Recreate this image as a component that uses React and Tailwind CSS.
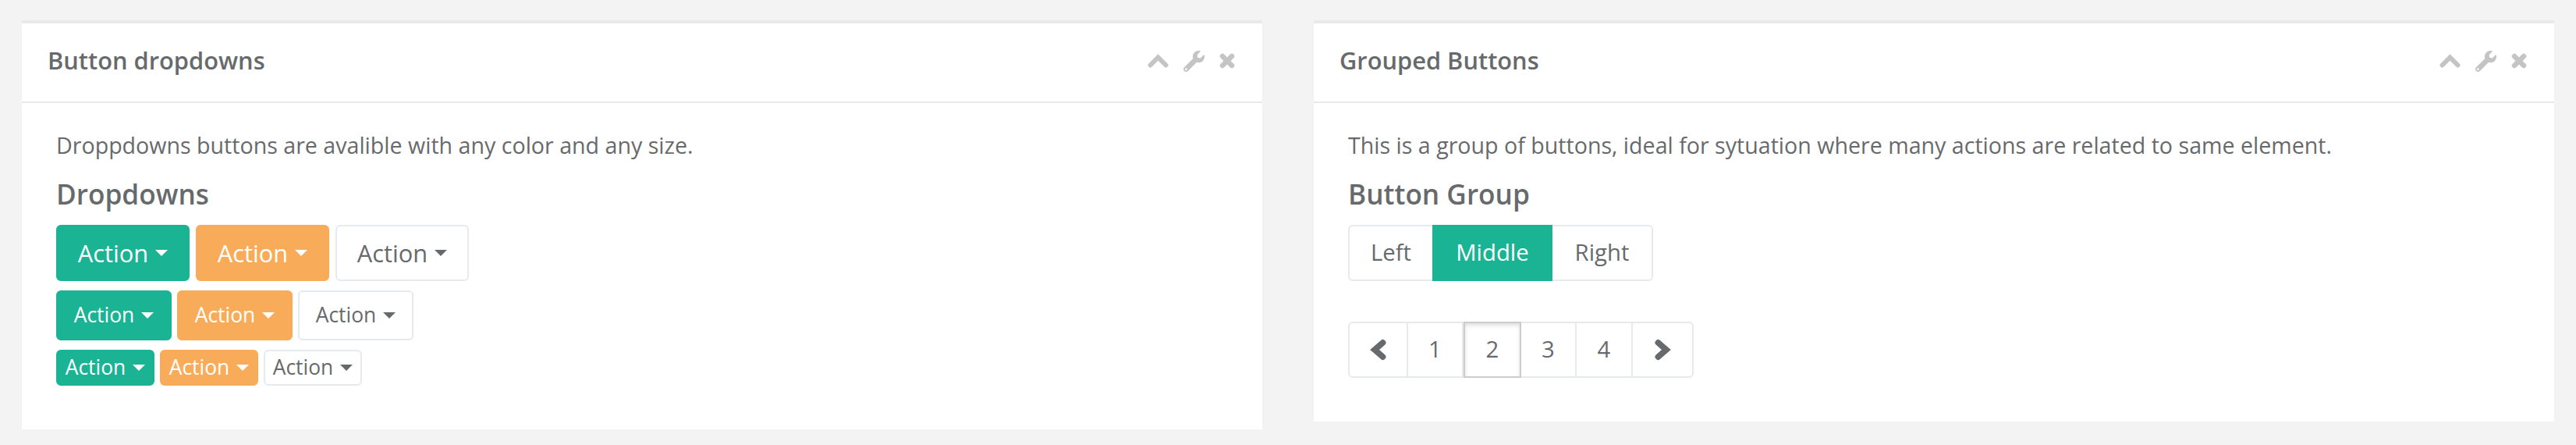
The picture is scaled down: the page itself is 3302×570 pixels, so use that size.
import React from "react";
import { FaWrench } from "react-icons/fa";

function Chevron({ d, className }) {
  return (
    <svg viewBox="0 0 20 20" className={className} fill="none" stroke="currentColor" strokeWidth="5.5" strokeLinecap="round" strokeLinejoin="miter">
      <polyline points={d} />
    </svg>
  );
}

function Panel({ title, className, children }) {
  return (
    <section className={"w-[1590px] bg-white border-t-4 border-[#e7eaec] " + className}>
      <header className="h-[102px] border-b-2 border-[#e7eaec] flex items-center justify-between pl-[33px] pr-[35px]">
        <h5 className="text-[30.8px] font-semibold leading-none text-[#676a6c] -mt-[6px]">{title}</h5>
        <div className="flex items-center gap-[19px] text-[#c4c4c4] -mt-[4px]">
          <svg viewBox="0 0 27 18" className="w-[27px] h-[18px]" fill="none" stroke="currentColor" strokeWidth="6" strokeLinecap="round" strokeLinejoin="miter"><polyline points="3.5,14.5 13.5,4.5 23.5,14.5" /></svg>
          <FaWrench className="w-[27px] h-[27px]" />
          <svg viewBox="0 0 20 20" className="w-[20px] h-[20px]" fill="none" stroke="currentColor" strokeWidth="6.5" strokeLinecap="round"><path d="M4 4 16 16M16 4 4 16" /></svg>
        </div>
      </header>
      {children}
    </section>
  );
}

function Drop({ kind, size }) {
  const k = {
    green: "bg-[#1ab394] text-white border-[#1ab394]",
    orange: "bg-[#f8ac59] text-white border-[#f8ac59]",
    white: "bg-white text-[#676a6c] border-[#e7eaec]",
  }[kind];
  const s = {
    lg: "h-[72px] w-[171px] text-[30.8px]",
    md: "h-[64px] w-[148px] text-[26.4px]",
    sm: "h-[46px] w-[126px] text-[26.4px]",
  }[size];
  const caret = kind === "white" ? "border-t-[#676a6c]" : "border-t-white";
  return (
    <button className={"flex items-center justify-center gap-[9px] rounded-[6px] border-2 " + k + " " + s}>
      <span>Action</span>
      <span className={"inline-block border-x-[8px] border-t-[8px] border-x-transparent " + caret} />
    </button>
  );
}

const Row = ({ className, kinds, size }) => (
  <div className={"flex " + className}>
    {kinds.map((k) => <Drop key={k} kind={k} size={size} />)}
  </div>
);

export default function App() {
  const kinds = ["green", "orange", "white"];
  return (
    <div className="w-[3302px] h-[570px] bg-[#f3f3f4] flex items-start gap-[66px] pl-[28px] pt-[26px] font-['Open_Sans',sans-serif] text-[#676a6c]">
      <Panel title="Button dropdowns" className="h-[524px]">
        <div className="pl-[44px] pt-[34px]">
          <p className="text-[28.6px] leading-[40px]">Droppdowns buttons are avalible with any color and any size.</p>
          <h3 className="text-[35.2px] leading-[44px] font-semibold mt-[20px]">Dropdowns</h3>
          <Row className="mt-[18px] gap-[8px]" kinds={kinds} size="lg" />
          <Row className="mt-[12px] gap-[7px]" kinds={kinds} size="md" />
          <Row className="mt-[12px] gap-[7px]" kinds={kinds} size="sm" />
        </div>
      </Panel>
      <Panel title="Grouped Buttons" className="h-[514px]">
        <div className="pl-[44px] pt-[34px]">
          <p className="text-[28.6px] leading-[40px]">This is a group of buttons, ideal for sytuation where many actions are related to same element.</p>
          <h3 className="text-[35.2px] leading-[44px] font-semibold mt-[20px]">Button Group</h3>
          <div className="mt-[18px] flex w-fit text-[29.3px] h-[72px]">
            <div className="w-[108px] border-2 border-r-0 border-[#e7eaec] rounded-l-[6px] flex items-center justify-center">Left</div>
            <div className="w-[154px] bg-[#1ab394] text-white flex items-center justify-center">Middle</div>
            <div className="w-[129px] border-2 border-l-0 border-[#e7eaec] rounded-r-[6px] flex items-center justify-center">Right</div>
          </div>
          <div className="mt-[52px] flex w-fit text-[29.3px] h-[72px]">
            <div className="w-[77px] border-2 border-[#e7eaec] rounded-l-[6px] flex items-center justify-center"><Chevron d="14,3.5 6.5,10 14,16.5" className="w-[28px] h-[28px]" /></div>
            <div className="w-[71px] border-y-2 border-r-2 border-[#e7eaec] flex items-center justify-center">1</div>
            <div className="w-[74px] border-2 border-[#cccccc] shadow-[inset_0_3px_5px_rgba(0,0,0,0.125)] flex items-center justify-center">2</div>
            <div className="w-[71px] border-y-2 border-r-2 border-[#e7eaec] flex items-center justify-center">3</div>
            <div className="w-[72px] border-y-2 border-r-2 border-[#e7eaec] flex items-center justify-center">4</div>
            <div className="w-[78px] border-y-2 border-r-2 border-[#e7eaec] rounded-r-[6px] flex items-center justify-center"><Chevron d="6,3.5 13.5,10 6,16.5" className="w-[28px] h-[28px]" /></div>
          </div>
        </div>
      </Panel>
    </div>
  );
}
